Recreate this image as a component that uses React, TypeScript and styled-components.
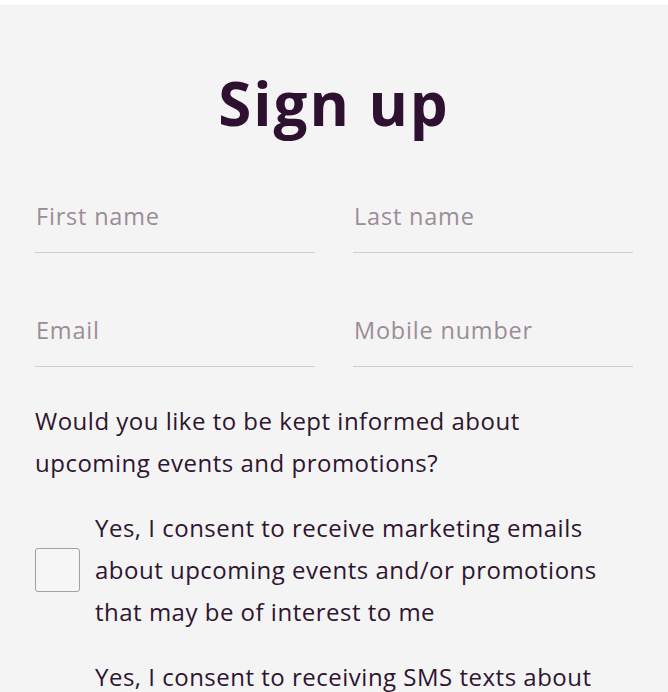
import React from "react";
import styled, { createGlobalStyle } from "styled-components";

const Global = createGlobalStyle`
  html, body { margin: 0; padding: 0; background: #ffffff; }
  body { font-family: "Open Sans", Lato, "Noto Sans", sans-serif; }
  * { box-sizing: border-box; }
`;

const Page = styled.div`
  padding-top: 5px;
  background: #ffffff;
  width: 668px;
  height: 692px;
  overflow: hidden;
`;

const Section = styled.section`
  background: #f4f4f4;
  padding: 62px 35px 40px;
  min-height: 687px;
`;

const Title = styled.h1`
  margin: 0;
  text-align: center;
  font-size: 60px;
  line-height: 72px;
  font-weight: 700;
  letter-spacing: 2px;
  color: #2e1130;
`;

const FieldGrid = styled.div`
  display: grid;
  grid-template-columns: 280px 280px;
  column-gap: 38px;
  row-gap: 52px;
  margin-top: 52px;
`;

const Input = styled.input`
  width: 100%;
  height: 62px;
  padding: 12px 0 24px 1px;
  border: none;
  border-bottom: 1px solid #d0cdcf;
  background: transparent;
  font-family: inherit;
  font-size: 23.5px;
  line-height: 26px;
  letter-spacing: 0.8px;
  color: #2e1530;
  outline: none;
  &::placeholder { color: #9b8c97; }
`;

const Question = styled.p`
  margin: 33px 0 0;
  font-size: 24px;
  line-height: 42px;
  letter-spacing: 0.5px;
  color: #2e1530;
`;

const ConsentRow = styled.label`
  display: flex;
  align-items: center;
  gap: 15px;
  margin-top: 23px;
`;

const Box = styled.span`
  flex: none;
  width: 45px;
  height: 44px;
  border: 1px solid #aa9ca6;
  border-radius: 3px;
  background: #f6f6f6;
`;

const ConsentText = styled.span`
  font-size: 24px;
  line-height: 42px;
  letter-spacing: 0.5px;
  color: #2e1530;
  max-width: 538px;
`;

export default function App() {
  return (
    <Page>
      <Global />
      <Section>
        <Title>Sign up</Title>
        <FieldGrid>
          <Input placeholder="First name" />
          <Input placeholder="Last name" />
          <Input placeholder="Email" />
          <Input placeholder="Mobile number" />
        </FieldGrid>
        <Question>
          Would you like to be kept informed about
          <br />
          upcoming events and promotions?
        </Question>
        <ConsentRow>
          <Box />
          <ConsentText>
            Yes, I consent to receive marketing emails
            <br />
            about upcoming events and/or promotions
            <br />
            that may be of interest to me
          </ConsentText>
        </ConsentRow>
        <ConsentRow>
          <Box />
          <ConsentText>
            Yes, I consent to receiving SMS texts about
            <br />
            upcoming events and/or promotions that
            <br />
            may be of interest to me
          </ConsentText>
        </ConsentRow>
      </Section>
    </Page>
  );
}
